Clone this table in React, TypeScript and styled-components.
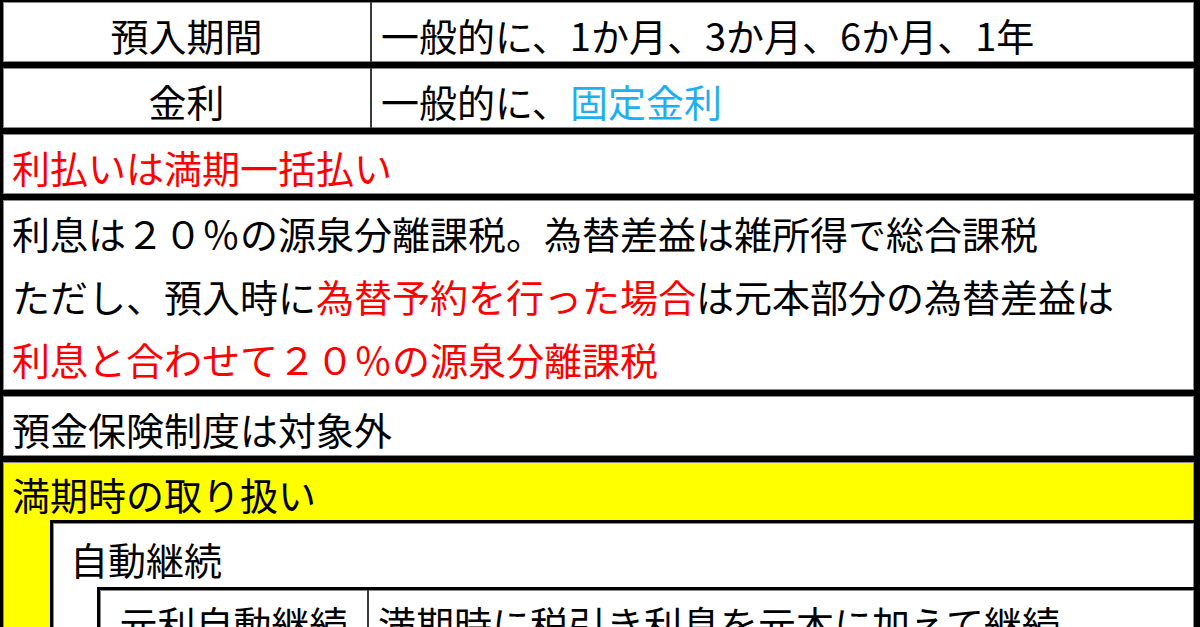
import React from "react";
import styled, { createGlobalStyle } from "styled-components";

const GlobalStyle = createGlobalStyle`
  html, body {
    margin: 0;
    padding: 0;
    background: #ffffff;
    overflow: hidden;
  }
  body {
    font-family: "Noto Sans CJK JP", "Noto Sans", sans-serif;
    color: #000;
  }
`;

const Sheet = styled.div`
  width: 1200px;
  margin-top: -1px;
  display: flex;
  flex-direction: column;
  font-size: 38px;
`;

const Box = styled.div<{ $bg?: string; $openRight?: boolean }>`
  border: 3px solid #000;
  border-right-width: ${(p) => (p.$openRight ? "0" : "6px")};
  background: ${(p) => p.$bg ?? "#fff"};
  box-shadow: inset 0 0 0 1px #8a8a8a;
`;

const Pair = styled.div<{ $label: number }>`
  display: grid;
  grid-template-columns: ${(p) => p.$label}px 1fr;
`;

const LabelCell = styled.div`
  border-right: 2px solid #3a3a3a;
  text-align: center;
  padding-top: 5px;
  line-height: 55px;
  white-space: nowrap;
`;

const ValueCell = styled.div`
  padding: 5px 0 0 9px;
  line-height: 55px;
  white-space: nowrap;
`;

const Line = styled.div<{ $indent?: number; $lh?: number; $pt?: number }>`
  padding-left: ${(p) => p.$indent ?? 9}px;
  padding-top: ${(p) => p.$pt ?? 5}px;
  line-height: ${(p) => p.$lh ?? 55}px;
  white-space: nowrap;
`;

const Lines = styled.div`
  padding-top: 1px;
  display: flex;
  flex-direction: column;
`;

const Tone = styled.span<{ $c: string }>`
  color: ${(p) => p.$c};
`;

const Nest = styled.div<{ $indent: number }>`
  margin-left: ${(p) => p.$indent}px;
  display: flex;
  flex-direction: column;
`;

const RED = "#ff0000";
const BLUE = "#1eb0ee";

export default function App() {
  return (
    <>
      <GlobalStyle />
      <Sheet>
        <Box>
          <Pair $label={369}>
            <LabelCell>預入期間</LabelCell>
            <ValueCell>一般的に、1か月、3か月、6か月、1年</ValueCell>
          </Pair>
        </Box>
        <Box>
          <Pair $label={369}>
            <LabelCell>金利</LabelCell>
            <ValueCell>
              一般的に、<Tone $c={BLUE}>固定金利</Tone>
            </ValueCell>
          </Pair>
        </Box>
        <Box>
          <Line>
            <Tone $c={RED}>利払いは満期一括払い</Tone>
          </Line>
        </Box>
        <Box>
          <Lines>
            <Line $pt={0} $lh={63}>
              利息は２０％の源泉分離課税。為替差益は雑所得で総合課税
            </Line>
            <Line $pt={0} $lh={63}>
              ただし、預入時に<Tone $c={RED}>為替予約を行った場合</Tone>
              は元本部分の為替差益は
            </Line>
            <Line $pt={0} $lh={63}>
              <Tone $c={RED}>利息と合わせて２０％の源泉分離課税</Tone>
            </Line>
          </Lines>
        </Box>
        <Box>
          <Line>預金保険制度は対象外</Line>
        </Box>
        <Box $bg="#ffff00">
          <Line $lh={53}>満期時の取り扱い</Line>
          <Nest $indent={47}>
            <Box $openRight>
              <Line $indent={17} $pt={7} $lh={57}>
                自動継続
              </Line>
              <Nest $indent={44}>
                <Box $openRight>
                  <Pair $label={269}>
                    <LabelCell>元利自動継続</LabelCell>
                    <ValueCell>満期時に税引き利息を元本に加えて継続</ValueCell>
                  </Pair>
                </Box>
              </Nest>
            </Box>
          </Nest>
        </Box>
      </Sheet>
    </>
  );
}
